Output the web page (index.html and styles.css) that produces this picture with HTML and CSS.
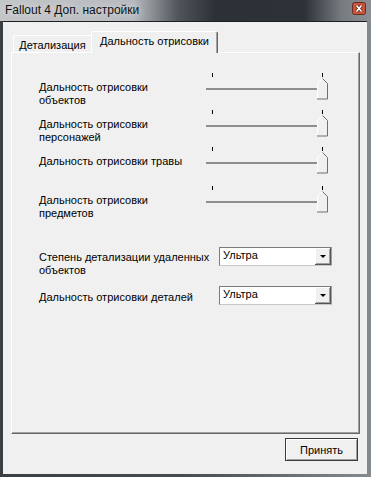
FILE: index.html
```html
<!doctype html>
<html lang="ru">
  <head>
    <meta charset="utf-8">
    <title>Fallout 4 Доп. настройки</title>
    <link rel="stylesheet" href="styles.css">
  </head>

  <body>

	<div class="window">

		<div class="titlebar">
			<span class="title">Fallout 4 Доп. настройки</span>
			<span class="close">
				<svg width="14" height="13" viewBox="0 0 14 13">
					<rect x="0.5" y="0.5" width="13" height="12" rx="2" fill="#c9543c" stroke="#6b2a1e"/>
					<path d="M4.5 3.5l5 6M9.5 3.5l-5 6" stroke="#5a2016" stroke-width="3"/>
					<path d="M4.5 3.5l5 6M9.5 3.5l-5 6" stroke="#fff" stroke-width="1.6"/>
				</svg>
			</span>
		</div>

		<div class="client">

			<div class="tabs">
				<div class="tab">Детализация</div>
				<div class="tab active">Дальность отрисовки</div>
			</div>

			<div class="panel">

				<div class="row r1">
					<div class="label">Дальность отрисовки<br>объектов</div>
					<svg class="slider" width="122" height="27" viewBox="0 0 122 27">
						<path d="M6.5 0v4M116.5 0v4" stroke="#000"/>
						<rect x="0" y="15" width="111" height="2" fill="#8e8e8e"/>
						<path d="M111.5 26V10.5l5-5" stroke="#fff" fill="none"/>
						<path d="M116.5 5.5l5 5v15.5H111" stroke="#6e6e6e" fill="none"/>
					</svg>
				</div>

				<div class="row r2">
					<div class="label">Дальность отрисовки<br>персонажей</div>
					<svg class="slider" width="122" height="27" viewBox="0 0 122 27">
						<path d="M6.5 0v4M116.5 0v4" stroke="#000"/>
						<rect x="0" y="15" width="111" height="2" fill="#8e8e8e"/>
						<path d="M111.5 26V10.5l5-5" stroke="#fff" fill="none"/>
						<path d="M116.5 5.5l5 5v15.5H111" stroke="#6e6e6e" fill="none"/>
					</svg>
				</div>

				<div class="row r3">
					<div class="label">Дальность отрисовки травы</div>
					<svg class="slider" width="122" height="27" viewBox="0 0 122 27">
						<path d="M6.5 0v4M116.5 0v4" stroke="#000"/>
						<rect x="0" y="15" width="111" height="2" fill="#8e8e8e"/>
						<path d="M111.5 26V10.5l5-5" stroke="#fff" fill="none"/>
						<path d="M116.5 5.5l5 5v15.5H111" stroke="#6e6e6e" fill="none"/>
					</svg>
				</div>

				<div class="row r4">
					<div class="label">Дальность отрисовки<br>предметов</div>
					<svg class="slider" width="122" height="27" viewBox="0 0 122 27">
						<path d="M6.5 0v4M116.5 0v4" stroke="#000"/>
						<rect x="0" y="15" width="111" height="2" fill="#8e8e8e"/>
						<path d="M111.5 26V10.5l5-5" stroke="#fff" fill="none"/>
						<path d="M116.5 5.5l5 5v15.5H111" stroke="#6e6e6e" fill="none"/>
					</svg>
				</div>

				<div class="row pick p1">
					<div class="label">Степень детализации удаленных<br>объектов</div>
					<div class="combo">
						<span class="value">Ультра</span>
						<span class="drop"><i class="arrow"></i></span>
					</div>
				</div>

				<div class="row pick p2">
					<div class="label">Дальность отрисовки деталей</div>
					<div class="combo">
						<span class="value">Ультра</span>
						<span class="drop"><i class="arrow"></i></span>
					</div>
				</div>

			</div>

			<div class="footer">
				<button class="btn">Принять</button>
			</div>

		</div>
	</div>

  </body>
</html>
```

FILE: styles.css
```css
		html, body
		{
			margin: 0;
			padding: 0;
		}

		body
		{
			background-color: #fff;
			font-family: "Liberation Sans", Arial, sans-serif;
			font-size: 11px;
			color: #000;
		}

		.window
		{
			width: 371px;
			height: 477px;
			display: flex;
			flex-direction: column;
			background: linear-gradient(90deg, #3a3f44 0, #474c51 50%, #858a8f 100%);
		}

		.titlebar
		{
			height: 21px;
			flex: none;
			display: flex;
			align-items: center;
			justify-content: space-between;
			padding: 0 5px 0 5px;
			background: linear-gradient(90deg, #c3c6c9 0, #b6babe 36%, #50555b 48%, #2c3137 58%, #2d3238 82%, #767b80 92%, #8d9196 100%);
		}

		.title
		{
			font-size: 12px;
			color: #111;
			text-shadow: 0 0 6px #e6e8ea;
			margin-top: -1px;
		}

		.close
		{
			display: flex;
			margin-top: -4px;
		}

		.client
		{
			flex: 1;
			margin: 0 4px 3px 3px;
			background-color: #f0f0f0;
			border-top: 1px solid #1c1f22;
			display: flex;
			flex-direction: column;
		}

		/* tabs */

		.tabs
		{
			display: flex;
			align-items: flex-end;
			height: 21px;
			margin: 9px 0 0 10px;
		}

		.tab
		{
			height: 17px;
			box-sizing: border-box;
			width: 78px;
			padding-top: 3px;
			text-align: center;
			border-top: 1px solid #fff;
			border-left: 1px solid #fff;
			border-top-left-radius: 2px;
			line-height: 13px;
		}

		.tab.active
		{
			position: relative;
			z-index: 1;
			width: 127px;
			height: 22px;
			margin-bottom: -1px;
			padding-top: 3px;
			background-color: #f0f0f0;
			border-right: 1px solid #696969;
			box-shadow: inset -1px 0 0 #a0a0a0;
			border-top-right-radius: 2px;
		}

		.panel
		{
			margin-left: 8px;
			width: 349px;
			height: 382px;
			box-sizing: border-box;
			border-top: 1px solid #fff;
			border-left: 1px solid #fff;
			border-right: 1px solid #696969;
			border-bottom: 1px solid #696969;
			box-shadow: inset -1px -1px 0 #a0a0a0;
			padding: 20px 0 0 27px;
		}

		/* rows */

		.row
		{
			display: flex;
			align-items: flex-start;
		}

		.r1, .r2 { height: 37px; }
		.r3 { height: 39px; }
		.r4 { height: 61px; }
		.p1 { height: 39px; }

		.label
		{
			width: 167px;
			line-height: 13px;
			margin-top: 8px;
		}

		.slider
		{
			display: block;
		}

		.pick .label
		{
			width: 180px;
			margin-top: 4px;
		}

		.p2 .label
		{
			margin-top: 5px;
		}

		.combo
		{
			width: 113px;
			height: 19px;
			box-sizing: border-box;
			display: flex;
			background-color: #fff;
			border: 1px solid #7a7a7a;
			border-right-color: #a0a0a0;
			border-bottom-color: #c8c8c8;
		}

		.value
		{
			flex: 1;
			line-height: 15px;
			padding-left: 3px;
		}

		.drop
		{
			width: 16px;
			height: 17px;
			box-sizing: border-box;
			display: flex;
			align-items: center;
			justify-content: center;
			background-color: #f0f0f0;
			border-right: 1px solid #555;
			border-bottom: 1px solid #555;
			box-shadow: inset 1px 1px 0 #fff, inset -1px -1px 0 #a0a0a0;
		}

		.arrow
		{
			width: 0;
			height: 0;
			border-left: 3px solid transparent;
			border-right: 3px solid transparent;
			border-top: 3px solid #000;
		}

		/* bottom */

		.footer
		{
			display: flex;
			justify-content: flex-end;
			padding: 4px 9px 0 0;
		}

		.btn
		{
			width: 73px;
			height: 23px;
			padding: 0;
			font-family: "Liberation Sans", Arial, sans-serif;
			font-size: 11px;
			color: #000;
			background-color: #f0f0f0;
			border: 1px solid #3c3c3c;
			box-shadow: inset 1px 1px 0 #fff, inset -1px -1px 0 #a0a0a0;
		}
```
